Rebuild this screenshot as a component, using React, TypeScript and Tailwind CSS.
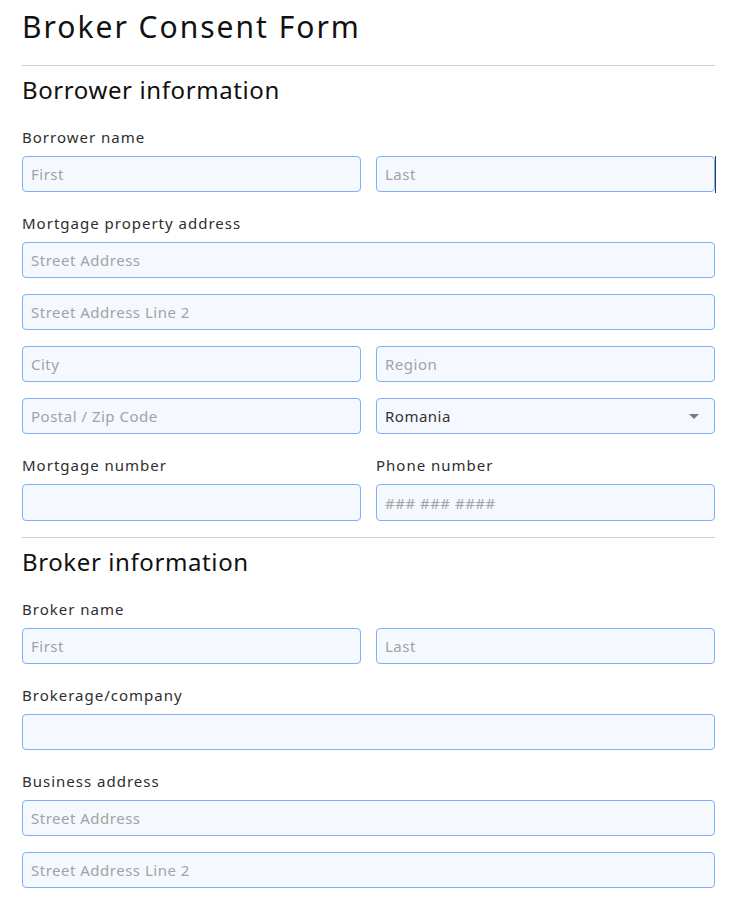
import React from "react";

const font = { fontFamily: '"Noto Sans", "Open Sans", Arial, sans-serif' };

const field =
  "block h-9 w-full rounded-[4px] border border-[#7db1f7] bg-[#f5f8fe] px-2 text-[15px] tracking-[0.5px] text-[#333] outline-none placeholder:text-[#a3a3a3]";

function Label({ children }: { children: React.ReactNode }) {
  return <label className="mb-2 block text-[15px] leading-[22px] tracking-[1px] text-[#2e2e2e]">{children}</label>;
}

function Heading({ children }: { children: React.ReactNode }) {
  return <h2 className="mt-2 text-[24px] leading-[32px] tracking-[0.6px] text-[#111]">{children}</h2>;
}

export default function App() {
  return (
    <div className="min-h-[900px] bg-white" style={font}>
      <div className="ml-[22px] w-[693px] pt-[9px]">
        <h1 className="text-[30px] leading-[36px] tracking-[2px] text-[#111]">Broker Consent Form</h1>
        <hr className="mt-[20px] border-t border-[#cfcfcf]" />

        <Heading>Borrower information</Heading>

        <div className="mt-5">
          <Label>Borrower name</Label>
          <div className="grid grid-cols-2 gap-x-[15px]">
            <input className={field} placeholder="First" />
            <div className="relative">
              <input className={field} placeholder="Last" />
              <span className="absolute -right-px top-0 h-[37px] w-px bg-[#2b3a4f]" />
            </div>
          </div>
        </div>

        <div className="mt-5">
          <Label>Mortgage property address</Label>
          <div className="flex flex-col gap-4">
            <input className={field} placeholder="Street Address" />
            <input className={field} placeholder="Street Address Line 2" />
            <div className="grid grid-cols-2 gap-x-[15px]">
              <input className={field} placeholder="City" />
              <input className={field} placeholder="Region" />
            </div>
            <div className="grid grid-cols-2 gap-x-[15px]">
              <input className={field} placeholder="Postal / Zip Code" />
              <div className="relative">
                <select className={`${field} appearance-none`} defaultValue="Romania">
                  <option>Romania</option>
                </select>
                <span className="pointer-events-none absolute right-[16px] top-[16px] h-0 w-0 border-x-[5px] border-t-[5px] border-x-transparent border-t-[#7a7a7a]" />
              </div>
            </div>
          </div>
        </div>

        <div className="mt-5 grid grid-cols-2 gap-x-[15px]">
          <div>
            <Label>Mortgage number</Label>
            <input className={`${field} h-[37px]`} />
          </div>
          <div>
            <Label>Phone number</Label>
            <input className={`${field} h-[37px]`} placeholder="### ### ####" />
          </div>
        </div>

        <hr className="mt-4 border-t border-[#cfcfcf]" />

        <Heading>Broker information</Heading>

        <div className="mt-5">
          <Label>Broker name</Label>
          <div className="grid grid-cols-2 gap-x-[15px]">
            <input className={field} placeholder="First" />
            <input className={field} placeholder="Last" />
          </div>
        </div>

        <div className="mt-5">
          <Label>Brokerage/company</Label>
          <input className={field} />
        </div>

        <div className="mt-5">
          <Label>Business address</Label>
          <div className="flex flex-col gap-4">
            <input className={field} placeholder="Street Address" />
            <input className={field} placeholder="Street Address Line 2" />
          </div>
        </div>
      </div>
    </div>
  );
}
